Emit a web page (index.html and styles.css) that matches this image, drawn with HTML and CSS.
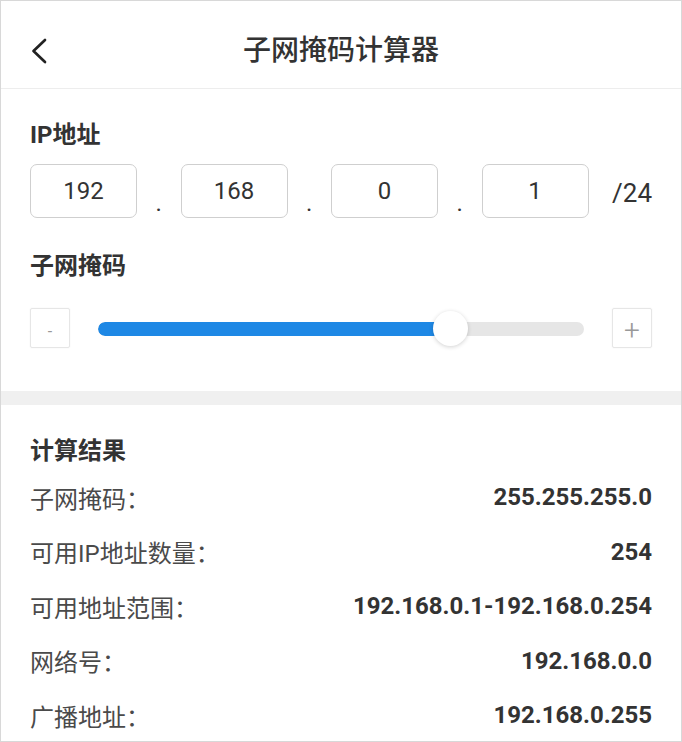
FILE: index.html
```html
<!DOCTYPE html>
<html lang="zh-CN">
<head>
<meta charset="utf-8">
<title>子网掩码计算器</title>
<link rel="stylesheet" href="styles.css">
</head>
<body>
<div class="page">
  <header class="topbar">
    <div class="back">
      <svg width="16" height="26" viewBox="0 0 16 26"><polyline points="14,2 2.5,13 14,24" fill="none" stroke="#222" stroke-width="2.7" stroke-linecap="round" stroke-linejoin="round"/></svg>
    </div>
    <h1 class="title">子网掩码计算器</h1>
    <div></div>
  </header>

  <section class="input-section">
    <h2 class="heading">IP地址</h2>
    <div class="ip-row">
      <div class="octet">192</div>
      <div class="dot">.</div>
      <div class="octet">168</div>
      <div class="dot">.</div>
      <div class="octet">0</div>
      <div class="dot">.</div>
      <div class="octet">1</div>
      <div class="cidr">/24</div>
    </div>

    <h2 class="heading heading-mask">子网掩码</h2>
    <div class="slider-row">
      <div class="step step-minus">-</div>
      <div class="slider">
        <div class="track"><div class="fill" style="width:72.6%"></div></div>
        <div class="thumb" style="left:72.6%"></div>
      </div>
      <div class="step step-plus">+</div>
    </div>
  </section>

  <div class="band"></div>

  <section class="result-section">
    <h2 class="heading">计算结果</h2>
    <div class="row"><span class="label">子网掩码：</span><span class="value">255.255.255.0</span></div>
    <div class="row"><span class="label">可用IP地址数量：</span><span class="value">254</span></div>
    <div class="row"><span class="label">可用地址范围：</span><span class="value">192.168.0.1-192.168.0.254</span></div>
    <div class="row"><span class="label">网络号：</span><span class="value">192.168.0.0</span></div>
    <div class="row"><span class="label">广播地址：</span><span class="value">192.168.0.255</span></div>
  </section>
</div>
</body>
</html>
```

FILE: styles.css
```css
* { box-sizing: border-box; }
html, body { margin: 0; padding: 0; background: #fff; }
body {
  font-family: Roboto, "Noto Sans CJK SC", sans-serif;
  color: #333;
}
.page {
  width: 682px;
  height: 742px;
  border: 1px solid #d8d8d8;
  overflow: hidden;
  background: #fff;
}
.topbar {
  height: 88px;
  padding: 13px 29px 0;
  display: grid;
  grid-template-columns: 1fr auto 1fr;
  align-items: center;
  border-bottom: 1px solid #ededed;
}
.back { display: flex; align-items: center; padding-left: 1px; }
.back svg { display: block; }
.title {
  margin: 0;
  font-size: 28px;
  font-weight: 500;
  color: #333;
  line-height: 36px;
}
.input-section { padding: 30px 29px 43px; }
.heading {
  margin: 0;
  font-size: 24px;
  line-height: 32px;
  font-weight: 700;
  color: #333;
}
.ip-row {
  margin-top: 13px;
  height: 54px;
  display: flex;
  align-items: stretch;
}
.octet {
  flex: 0 0 107px;
  border: 1.5px solid #cfcfcf;
  border-radius: 7px;
  display: flex;
  align-items: center;
  justify-content: center;
  font-size: 24px;
  color: #333;
}
.dot {
  flex: 0 0 43.5px;
  display: flex;
  align-items: flex-end;
  justify-content: center;
  font-size: 24px;
  line-height: 24px;
  padding-bottom: 3px;
  color: #333;
}
.cidr {
  margin-left: auto;
  display: flex;
  align-items: center;
  padding-top: 4px;
  font-size: 26px;
  color: #333;
}
.heading-mask { margin-top: 32px; }
.slider-row {
  margin-top: 26px;
  height: 40px;
  display: flex;
  align-items: center;
}
.step {
  flex: 0 0 40px;
  height: 40px;
  border: 1px solid #e6e6e6;
  border-radius: 2px;
  box-shadow: 0 0 2px rgba(0,0,0,0.06);
  display: flex;
  align-items: center;
  justify-content: center;
  color: #999;
}
.step-minus { font-size: 16px; padding-top: 6px; }
.step-plus { font-size: 28px; font-weight: 300; padding-top: 4px; }
.slider {
  flex: 1;
  margin: 0 28px 0 28px;
  position: relative;
  height: 40px;
  display: flex;
  align-items: center;
}
.track {
  width: 100%;
  height: 14px;
  border-radius: 7px;
  background: #e6e6e6;
  overflow: hidden;
  margin-top: 2px;
}
.fill {
  height: 100%;
  background: #1e88e5;
  border-radius: 7px 0 0 7px;
}
.thumb {
  position: absolute;
  top: 3px;
  width: 35px;
  height: 35px;
  margin-left: -17.5px;
  border-radius: 50%;
  background: #fff;
  box-shadow: 0 1px 4px rgba(0,0,0,0.18);
}
.band { height: 14px; background: #f0f0f0; }
.result-section { padding: 30px 29px 0; }
.result-section .heading { margin-bottom: 3px; }
.row {
  height: 54.5px;
  display: flex;
  align-items: center;
  justify-content: space-between;
}
.label {
  font-size: 24px;
  color: #4a4a4a;
}
.value {
  font-size: 24px;
  font-weight: 700;
  color: #333;
}
```
